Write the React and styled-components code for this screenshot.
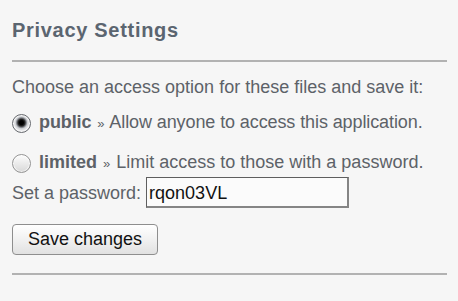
import styled, { createGlobalStyle } from 'styled-components';

const GlobalStyle = createGlobalStyle`
  html, body {
    margin: 0;
    padding: 0;
    background: #f6f6f6;
  }
  body {
    font-family: "Liberation Sans", Arial, sans-serif;
    color: #5d6268;
  }
`;

const Panel = styled.div`
  padding: 0 11px 0 12px;
  display: flex;
  flex-direction: column;
`;

const Title = styled.h2`
  margin: 18px 0 18px;
  font-size: 20px;
  line-height: 24px;
  font-weight: bold;
  letter-spacing: 0.7px;
  color: #5b6570;
`;

const Rule = styled.div`
  height: 2px;
  background: #b2b2b2;
  margin-top: ${(p) => p.$top || 0}px;
`;

const Intro = styled.p`
  margin: 14px 0 0;
  font-size: 18px;
  line-height: 22px;
`;

const OptionRow = styled.label`
  display: flex;
  align-items: center;
  gap: 8px;
  margin-top: ${(p) => p.$top}px;
  font-size: 18px;
  line-height: 22px;
  letter-spacing: ${(p) => p.$tight ? '-0.1px' : '0'};
`;

const Radio = styled.span`
  width: 19px;
  height: 19px;
  box-sizing: border-box;
  border-radius: 50%;
  border: 1px solid ${(p) => (p.$checked ? '#66696e' : '#949494')};
  background: ${(p) =>
    p.$checked
      ? 'radial-gradient(circle at 50% 45%, #000 0 2px, #2a2a2a 3.5px, #80838a 4.8px, #cfd1d4 6px, #ececee 8px)'
      : 'linear-gradient(#fdfdfd, #d8d8d8)'};
  box-shadow: inset 0 0 0 1px rgba(255, 255, 255, 0.6);
  flex-shrink: 0;
  margin-top: 1px;
`;

const Option = styled.strong`
  font-weight: bold;
`;

const Arrow = styled.span`
  font-size: 13px;
  margin: 0 1px;
`;

const PasswordRow = styled.div`
  display: flex;
  align-items: center;
  gap: 5px;
  margin-top: 2px;
  font-size: 18px;
  line-height: 22px;
`;

const PasswordInput = styled.input`
  width: 203px;
  height: 31px;
  box-sizing: border-box;
  border-top: 1px solid #5e5e5e;
  border-left: 1px solid #5e5e5e;
  border-right: 2px solid #858585;
  border-bottom: 2px solid #858585;
  background: #fbfbfb;
  padding: 2px 2px 0 2px;
  font-family: "Liberation Sans", Arial, sans-serif;
  font-size: 18px;
  color: #111;
  outline: none;
`;

const SaveButton = styled.button`
  align-self: flex-start;
  margin-top: 16px;
  width: 146px;
  height: 31px;
  box-sizing: border-box;
  border: 1px solid #8e8e8e;
  border-radius: 4px;
  background: linear-gradient(#ffffff, #f1f1f1 50%, #e1e1e1);
  font-family: "Liberation Sans", Arial, sans-serif;
  font-size: 18px;
  color: #111;
  padding: 0;
`;

export default function App() {
  return (
    <>
      <GlobalStyle />
      <Panel>
        <Title>Privacy Settings</Title>
        <Rule />
        <Intro>Choose an access option for these files and save it:</Intro>
        <OptionRow $top={13} $tight>
          <Radio $checked />
          <span>
            <Option>public</Option> <Arrow>»</Arrow> Allow anyone to access this application.
          </span>
        </OptionRow>
        <OptionRow $top={16}>
          <Radio />
          <span>
            <Option>limited</Option> <Arrow>»</Arrow> Limit access to those with a password.
          </span>
        </OptionRow>
        <PasswordRow>
          <span>Set a password:</span>
          <PasswordInput type="text" defaultValue="rqon03VL" />
        </PasswordRow>
        <SaveButton>Save changes</SaveButton>
        <Rule $top={18} />
      </Panel>
    </>
  );
}
